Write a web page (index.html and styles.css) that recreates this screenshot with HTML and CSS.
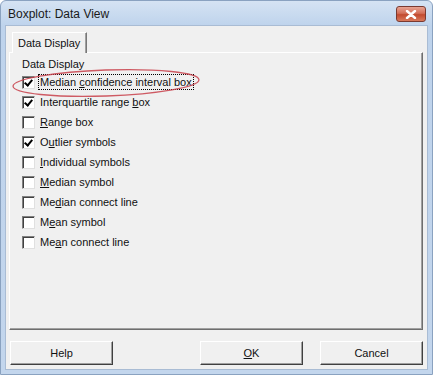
FILE: index.html
```html
<!DOCTYPE html>
<html lang="en">
<head>
  <meta charset="UTF-8" />
  <title>Boxplot: Data View</title>
  <link rel="stylesheet" href="styles.css">
</head>
<body>

  <div class="window">
    <div class="titlebar">
      <span class="title">Boxplot: Data View</span>
      <button class="close-btn">
        <svg width="12" height="9" viewBox="0 0 12 9"><path d="M2 1 L10 8 M10 1 L2 8" stroke="#fff" stroke-width="2.4" stroke-linecap="round"/></svg>
      </button>
    </div>

    <div class="client">
      <div class="tabs">
        <div class="tab">Data Display</div>
      </div>

      <div class="panel">
        <div class="group-label">Data Display</div>
        <ul class="options">
          <li class="focused"><span class="box checked"></span><span class="label">Median <u>c</u>onfidence interval box</span></li>
          <li><span class="box checked"></span><span class="label">Interquartile range <u>b</u>ox</span></li>
          <li><span class="box"></span><span class="label"><u>R</u>ange box</span></li>
          <li><span class="box checked"></span><span class="label">O<u>u</u>tlier symbols</span></li>
          <li><span class="box"></span><span class="label"><u>I</u>ndividual symbols</span></li>
          <li><span class="box"></span><span class="label"><u>M</u>edian symbol</span></li>
          <li><span class="box"></span><span class="label">Me<u>d</u>ian connect line</span></li>
          <li><span class="box"></span><span class="label">M<u>e</u>an symbol</span></li>
          <li><span class="box"></span><span class="label">Me<u>a</u>n connect line</span></li>
        </ul>
      </div>

      <div class="buttons">
        <button class="btn">Help</button>
        <div class="spacer"></div>
        <button class="btn"><u>O</u>K</button>
        <button class="btn">Cancel</button>
      </div>
    </div>

    <!-- annotation ring -->
    <svg class="ring" width="192" height="32" viewBox="0 0 192 32">
      <ellipse cx="96" cy="16" rx="93" ry="13" fill="none" stroke="#c8404a" stroke-width="1.3" opacity="0.85" transform="rotate(-2 96 16)"/>
    </svg>
  </div>

</body>
</html>
```

FILE: styles.css
```css
body {
  margin: 0;
  background-color: #fff;
  font-family: 'Liberation Sans', sans-serif;
  font-size: 11px;
  color: #111;
}

.window {
  position: relative;
  width: 433px;
  height: 375px;
  box-sizing: border-box;
  background: linear-gradient(to bottom, #d5e3f3 0px, #bed3ec 25px, #c3d6ed 100%);
  border: 1px solid #8aa2c0;
  border-radius: 6px 6px 0 0;
  padding: 0 4px 4px 4px;
  display: flex;
  flex-direction: column;
}

.titlebar {
  height: 24px;
  display: flex;
  align-items: center;
  justify-content: space-between;
  padding-left: 3px;
}

.title {
  font-size: 12px;
  color: #1a1a1a;
  margin-top: 2px;
}

.close-btn {
  width: 30px;
  height: 16px;
  margin-right: 2px;
  margin-top: 2px;
  border: 1px solid #7a3a30;
  border-radius: 3px;
  background: linear-gradient(to bottom, #e8a493 0%, #d36f58 45%, #c24a2e 55%, #d8795c 100%);
  display: flex;
  align-items: center;
  justify-content: center;
  padding: 0;
}

.client {
  flex: 1;
  background-color: #f0f0f0;
  border: 1px solid #a9bcd4;
  display: flex;
  flex-direction: column;
  padding: 6px 4px 0 3px;
}

.tabs {
  display: flex;
  padding-left: 3px;
  height: 20px;
}

.tab {
  font-size: 11px;
  padding: 2px 6px 0 5px;
  border-top: 1px solid #fff;
  border-left: 1px solid #fff;
  border-right: 1px solid #777;
  box-shadow: inset -1px 0 0 #a0a0a0;
  margin-bottom: -1px;
  background-color: #f0f0f0;
  position: relative;
  z-index: 1;
  line-height: 16px;
}

.panel {
  height: 272px;
  border-top: 1px solid #fff;
  border-left: 1px solid #fff;
  border-right: 1px solid #6e6e6e;
  border-bottom: 1px solid #6e6e6e;
  box-shadow: inset -1px -1px 0 #a0a0a0;
  padding: 4px 10px 0 12px;
}

.group-label {
  font-size: 11px;
  height: 15px;
  line-height: 15px;
}

.options {
  list-style: none;
  margin: 0;
  padding: 0;
}

.options li {
  display: flex;
  align-items: center;
  height: 20px;
  font-size: 11px;
}

.box {
  width: 11px;
  height: 11px;
  background: #fff;
  border-top: 1px solid #808080;
  border-left: 1px solid #808080;
  border-right: 1px solid #e0e0e0;
  border-bottom: 1px solid #e0e0e0;
  box-shadow: inset 1px 1px 0 #404040;
  margin-right: 4px;
  position: relative;
}

.box.checked::after {
  content: "";
  position: absolute;
  left: 3px;
  top: 1px;
  width: 3px;
  height: 6px;
  border-right: 2px solid #000;
  border-bottom: 2px solid #000;
  transform: rotate(40deg);
}

.label {
  padding: 0 1px;
  line-height: 14px;
}

.focused .label {
  outline: 1px dotted #000;
}

.buttons {
  display: flex;
  align-items: center;
  gap: 17px;
  margin-top: 11px;
  padding-left: 1px;
}

.spacer {
  flex: 1;
}

.btn {
  width: 103px;
  height: 24px;
  font-family: 'Liberation Sans', sans-serif;
  font-size: 11px;
  color: #111;
  background-color: #f0f0f0;
  border-top: 1px solid #fff;
  border-left: 1px solid #fff;
  border-right: 1px solid #404040;
  border-bottom: 1px solid #404040;
  box-shadow: inset -1px -1px 0 #a0a0a0;
  padding: 0;
}

.ring {
  position: absolute;
  left: 9px;
  top: 66px;
}
```
